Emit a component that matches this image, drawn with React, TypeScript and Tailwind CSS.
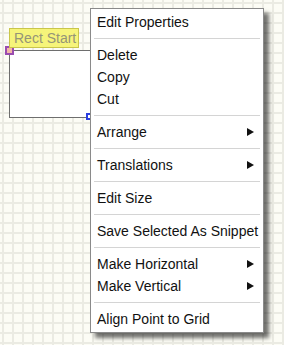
import React from "react";

const groups: { label: string; sub?: boolean }[][] = [
  [{ label: "Edit Properties" }],
  [{ label: "Delete" }, { label: "Copy" }, { label: "Cut" }],
  [{ label: "Arrange", sub: true }],
  [{ label: "Translations", sub: true }],
  [{ label: "Edit Size" }],
  [{ label: "Save Selected As Snippet" }],
  [{ label: "Make Horizontal", sub: true }, { label: "Make Vertical", sub: true }],
  [{ label: "Align Point to Grid" }],
];

function Arrow() {
  return (
    <svg width="7" height="8" viewBox="0 0 7 8" className="shrink-0">
      <path d="M0 0 L7 4 L0 8 Z" fill="#111" />
    </svg>
  );
}

export default function App() {
  return (
    <div
      className="relative w-[284px] h-[345px] overflow-hidden bg-[#fcfcf5] bg-[image:linear-gradient(to_right,#ebebe3_2px,transparent_2px),linear-gradient(to_bottom,#ebebe3_2px,transparent_2px)] bg-[size:10px_10px] bg-[position:2px_2px]"
      style={{ fontFamily: '"Liberation Sans", Arial, sans-serif' }}
    >
      {/* rectangle shape */}
      <div className="absolute left-[9px] top-[50px] w-[90px] h-[68px] bg-white border-[1.5px] border-[#6e6e6e]" />
      {/* start handle */}
      <div className="absolute left-[5px] top-[46px] w-[9px] h-[9px] bg-[#f3b8a8] border-2 border-[#9a4cb0]" />
      {/* end handle */}
      <div className="absolute left-[86px] top-[113px] w-[7px] h-[7px] bg-white border-2 border-[#2b3fe0]" />
      {/* label */}
      <div className="absolute left-[9px] top-[28px] w-[70px] h-[20px] bg-[#f6f47a] border border-[#c9c64a] text-[#959578] text-[14px] leading-[18px] pl-[4px] whitespace-nowrap">
        Rect Start
      </div>

      {/* context menu */}
      <div className="absolute left-[90px] top-[8px] w-[174px] bg-white border border-[#8a8a8a] shadow-[5px_5px_4px_rgba(0,0,0,0.55)] pt-[2px] pb-[2px] text-[14px] text-[#111]">
        {groups.map((g, gi) => (
          <div key={gi}>
            {gi > 0 && <div className="mx-[3px] my-[5px] h-px bg-[#d4d4d4]" />}
            {g.map((it) => (
              <div key={it.label} className="flex items-center justify-between h-[22px] pl-[6px] pr-[9px] whitespace-nowrap">
                <span>{it.label}</span>
                {it.sub && <Arrow />}
              </div>
            ))}
          </div>
        ))}
      </div>
    </div>
  );
}
